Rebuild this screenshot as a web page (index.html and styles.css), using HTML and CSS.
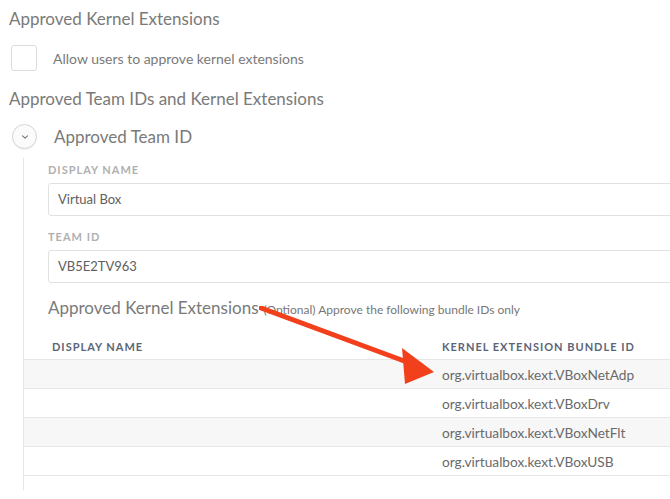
FILE: index.html
```html
<!DOCTYPE html>
<html lang="en">
<head>
    <meta charset="UTF-8">
    <meta name="viewport" content="width=device-width, initial-scale=1.0">
    <title>Approved Kernel Extensions</title>
    <link rel="stylesheet" href="styles.css">
</head>
<body>
    <main class="page">
        <h2 class="section-title">Approved Kernel Extensions</h2>
        <label class="check-row">
            <span class="checkbox"></span>
            <span class="check-text">Allow users to approve kernel extensions</span>
        </label>

        <h2 class="section-title">Approved Team IDs and Kernel Extensions</h2>

        <div class="group">
            <div class="group-head">
                <span class="toggle">
                    <svg width="8" height="6" viewBox="0 0 8 6"><path d="M1.5 1.8 L4 4.2 L6.5 1.8" fill="none" stroke="#777" stroke-width="1.1" stroke-linecap="round" stroke-linejoin="round"/></svg>
                </span>
                <span class="group-title">Approved Team ID</span>
            </div>

            <div class="group-body">
                <div class="field">
                    <div class="field-label">Display Name</div>
                    <div class="field-input">Virtual Box</div>
                </div>
                <div class="field">
                    <div class="field-label">Team ID</div>
                    <div class="field-input">VB5E2TV963</div>
                </div>

                <div class="sub-head">
                    <span class="sub-title">Approved Kernel Extensions</span>
                    <span class="sub-note">(Optional) Approve the following bundle IDs only</span>
                </div>

                <table class="ext-table">
                    <thead>
                        <tr>
                            <th class="col-name">Display Name</th>
                            <th>Kernel Extension Bundle ID</th>
                        </tr>
                    </thead>
                    <tbody>
                        <tr><td></td><td>org.virtualbox.kext.VBoxNetAdp</td></tr>
                        <tr><td></td><td>org.virtualbox.kext.VBoxDrv</td></tr>
                        <tr><td></td><td>org.virtualbox.kext.VBoxNetFlt</td></tr>
                        <tr><td></td><td>org.virtualbox.kext.VBoxUSB</td></tr>
                    </tbody>
                </table>
            </div>
        </div>

        <!-- annotation arrow drawn over the screenshot -->
        <svg class="arrow" width="200" height="90" viewBox="0 0 200 90">
            <line x1="2" y1="2" x2="156" y2="59" stroke="#f2401d" stroke-width="5" stroke-linecap="round"/>
            <polygon points="175,66 143,42 146,78" fill="#f2401d"/>
        </svg>
    </main>
</body>
</html>
```

FILE: styles.css
```css
body {
    margin: 0;
    font-family: Lato, "Open Sans", sans-serif;
    background: #fff;
    overflow: hidden;
}

.page {
    position: relative;
    width: 720px;
    padding-top: 9px;
}

.section-title {
    margin: 0 0 0 9px;
    font-size: 17px;
    line-height: 20px;
    font-weight: 400;
    color: #7a7a7a;
}

.check-row {
    display: flex;
    align-items: center;
    gap: 16px;
    margin: 16px 0 18px 11px;
}

.checkbox {
    width: 24px;
    height: 24px;
    border: 1px solid #dcdcdc;
    border-radius: 3px;
}

.check-text {
    font-size: 14px;
    color: #7a7a7a;
}

.group {
    margin-top: 15px;
}

.group-head {
    display: flex;
    align-items: center;
    gap: 17px;
    margin-left: 12px;
}

.toggle {
    display: flex;
    align-items: center;
    justify-content: center;
    width: 23px;
    height: 23px;
    border: 1px solid #d6d6d6;
    border-radius: 50%;
    background: #fbfbfb;
    box-shadow: 0 1px 1px rgba(0, 0, 0, 0.06);
}

.group-title {
    font-size: 17px;
    line-height: 24px;
    color: #7a7a7a;
}

.group-body {
    margin: 9px 0 0 23px;
    padding: 5px 0 14px;
    border-left: 1px solid #e6e6e6;
}

.field {
    margin: 0 0 14px 24px;
}

.field-label {
    font-size: 11px;
    line-height: 14px;
    font-weight: 700;
    letter-spacing: 1px;
    text-transform: uppercase;
    color: #b0b0b0;
    margin-bottom: 6px;
}

.field-input {
    height: 31px;
    line-height: 31px;
    padding-left: 9px;
    border: 1px solid #e1e1e1;
    border-radius: 3px;
    font-size: 13px;
    color: #5e5e5e;
}

.sub-head {
    display: flex;
    align-items: baseline;
    gap: 5px;
    margin: 10px 0 0 24px;
    height: 28px;
}

.sub-title {
    font-size: 17px;
    color: #7a7a7a;
}

.sub-note {
    font-size: 12px;
    color: #777;
}

.ext-table {
    width: 100%;
    margin-top: 8px;
    border-collapse: collapse;
}

.ext-table th {
    height: 26px;
    padding: 0;
    text-align: left;
    font-size: 11px;
    font-weight: 700;
    letter-spacing: 1px;
    text-transform: uppercase;
    color: #5c6578;
}

.ext-table th.col-name {
    width: 418px;
    padding-left: 28px;
    box-sizing: border-box;
}

.ext-table td {
    height: 28px;
    padding: 0;
    border-top: 1px solid #e6e6e6;
    border-bottom: 1px solid #e6e6e6;
    font-size: 13.7px;
    color: #6a6a6a;
}

.ext-table tbody tr:nth-child(odd) {
    background: #f7f7f7;
}

.arrow {
    position: absolute;
    left: 259px;
    top: 306px;
}
```
